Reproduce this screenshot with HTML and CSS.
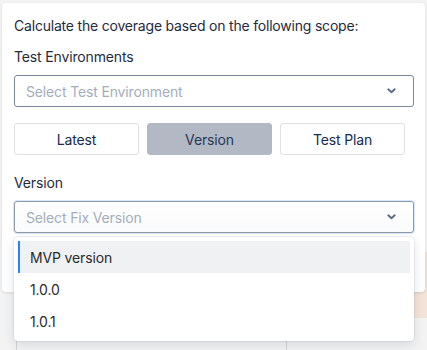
FILE: index.html
```html
<!DOCTYPE html>
<html>
<head>
<meta charset="utf-8">
<link rel="stylesheet" href="styles.css">
</head>
<body>
<div class="backdrop">
  <div class="peach"></div>
  <div class="table-row">
    <div class="cell cell-a"></div>
    <div class="cell cell-b"></div>
  </div>
</div>
<div class="panel">
  <p class="title">Calculate the coverage based on the following scope:</p>
  <div class="label">Test Environments</div>
  <div class="select">
    <span class="placeholder">Select Test Environment</span>
    <svg class="chev" width="9" height="6" viewBox="0 0 9 6"><path d="M1.3 1.3 L4.5 4.3 L7.7 1.3" fill="none" stroke="#5e6c84" stroke-width="1.9" stroke-linecap="round" stroke-linejoin="round"/></svg>
  </div>
  <div class="tabs">
    <button class="tab">Latest</button>
    <button class="tab active">Version</button>
    <button class="tab">Test Plan</button>
  </div>
  <div class="label label-version">Version</div>
  <div class="select focused">
    <span class="placeholder">Select Fix Version</span>
    <svg class="chev" width="9" height="6" viewBox="0 0 9 6"><path d="M1.3 1.3 L4.5 4.3 L7.7 1.3" fill="none" stroke="#5e6c84" stroke-width="1.9" stroke-linecap="round" stroke-linejoin="round"/></svg>
  </div>
</div>
<div class="menu">
  <div class="item selected">MVP version</div>
  <div class="item">1.0.0</div>
  <div class="item">1.0.1</div>
</div>
</body>
</html>
```
FILE: styles.css
```css
* { box-sizing: border-box; }
html, body { margin: 0; padding: 0; }
body {
  width: 427px;
  height: 350px;
  overflow: hidden;
  background: #f3f3f3;
  font-family: Inter, "Noto Sans", sans-serif;
  color: #172b4d;
  position: relative;
}
.backdrop { position: absolute; inset: 0; }
.peach {
  position: absolute;
  left: 413px; top: 252px;
  width: 14px; height: 66px;
  background: #f4e3d8;
}
.table-row {
  position: absolute;
  left: 16px; top: 318px;
  display: flex;
  height: 40px;
}
.cell { border-left: 1px solid #d4d4d4; height: 100%; }
.cell-a { width: 270px; }
.cell-b { width: 130px; }
.panel {
  position: relative;
  margin: 3px 0 0 2px;
  width: 423px;
  height: 289px;
  background: #fff;
  border-radius: 4px;
  box-shadow: 0 1px 3px rgba(9,30,66,0.12);
  padding: 13px 11px 0 12px;
  display: flex;
  flex-direction: column;
}
.title {
  margin: 0;
  font-size: 14px;
  line-height: 20px;
  letter-spacing: -0.2px;
  color: #1f2b3d;
}
.label {
  margin-top: 11px;
  font-size: 14px;
  line-height: 20px;
  letter-spacing: -0.15px;
  color: #1f2b3d;
}
.label-version { margin-top: 18px; }
.select {
  margin-top: 8px;
  height: 32px;
  border: 1px solid #7a869a;
  border-radius: 3px;
  display: flex;
  align-items: center;
  justify-content: space-between;
  padding: 0 17px 0 11px;
  background: #fff;
}
.select.focused {
  border-color: #8f99aa;
  box-shadow: 0 0 0 1px #d6e6fb;
  background: linear-gradient(#fff, #fafbfc);
}
.placeholder {
  font-size: 14px;
  letter-spacing: -0.15px;
  color: #a5adba;
}
.chev { display: block; }
.tabs {
  margin-top: 16px;
  display: flex;
  gap: 8px;
}
.tab {
  width: 125px;
  height: 32px;
  border: 1px solid #dfe1e6;
  border-radius: 3px;
  background: #fff;
  font-family: inherit;
  font-size: 14px;
  letter-spacing: -0.15px;
  color: #172b4d;
  padding: 0;
}
.tab.active {
  background: #b3b9c4;
  border-color: #b3b9c4;
  color: #253858;
}
.menu {
  position: absolute;
  left: 14px; top: 237px;
  width: 400px;
  background: #fff;
  border-radius: 4px;
  box-shadow: 0 0 0 1px rgba(9,30,66,0.06), 0 4px 11px rgba(9,30,66,0.12);
  padding: 4px;
}
.item {
  height: 32px;
  display: flex;
  align-items: center;
  padding-left: 12px;
  font-size: 14px;
  letter-spacing: -0.15px;
  color: #2b2b2b;
}
.item.selected {
  background: #f0f1f3;
  border-left: 2px solid #2684ff;
  padding-left: 10px;
}
```
